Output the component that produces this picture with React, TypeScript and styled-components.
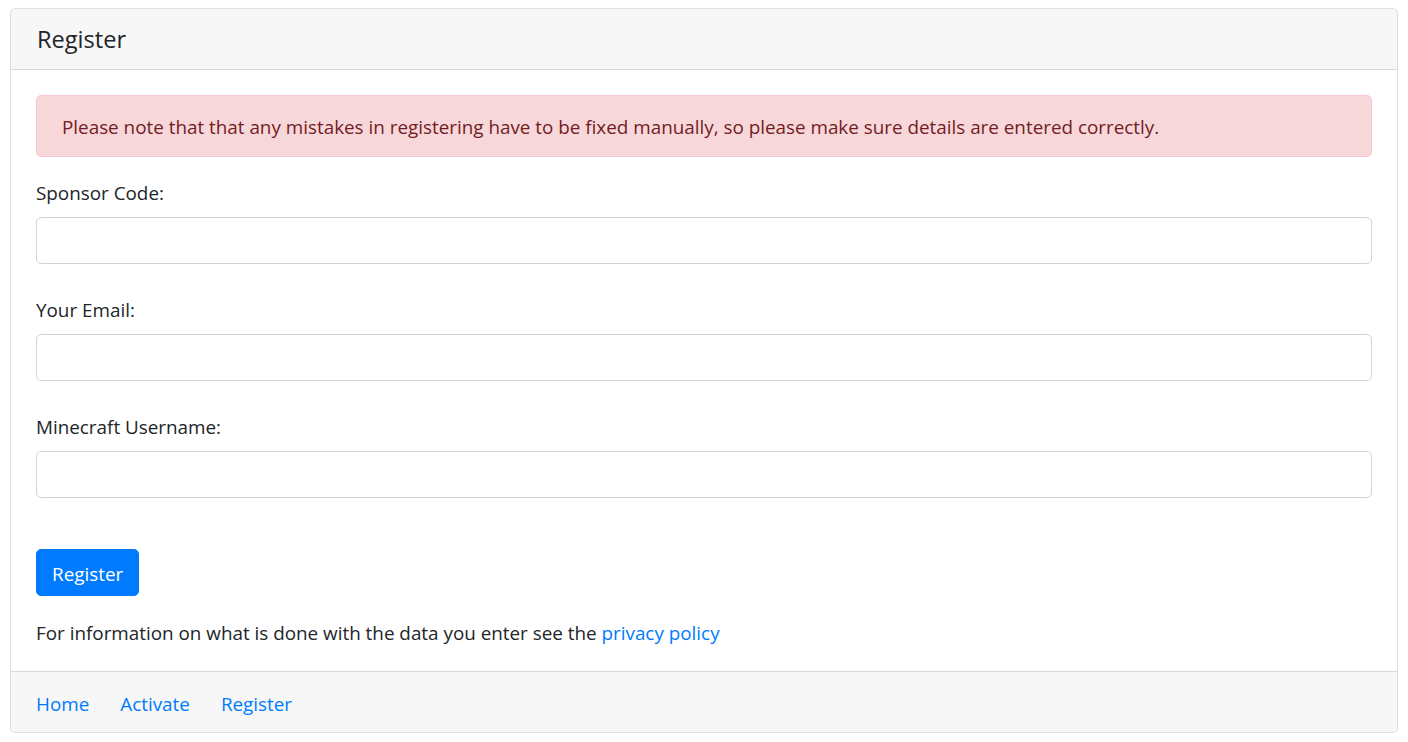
import React from "react";
import styled, { createGlobalStyle } from "styled-components";

const Global = createGlobalStyle`
  html, body { margin: 0; padding: 0; background: #fff; }
  body {
    font-family: "Open Sans", "Noto Sans", sans-serif;
    font-size: 18.85px;
    line-height: 30px;
    color: #212529;
  }
  * { box-sizing: border-box; }
`;

const Page = styled.div`
  padding: 8px 10px 9px 10px;
`;

const Card = styled.div`
  display: flex;
  flex-direction: column;
  border: 1px solid rgba(0, 0, 0, 0.125);
  border-radius: 5px;
  background: #fff;
  overflow: hidden;
`;

const CardHeader = styled.div`
  background: rgba(0, 0, 0, 0.03);
  border-bottom: 1px solid rgba(0, 0, 0, 0.125);
  padding: 15px 25px;
`;

const Title = styled.h5`
  margin: 0;
  font-size: 23.6px;
  font-weight: 400;
  line-height: 30px;
  padding-left: 1px;
`;

const CardBody = styled.div`
  padding: 25px 25px 23px;
  display: flex;
  flex-direction: column;
`;

const Alert = styled.div`
  background: #f8d7da;
  border: 1px solid #f5c6cb;
  color: #721c24;
  border-radius: 5px;
  padding: 16px 25px 14px;
  margin-bottom: 20px;
`;

const Field = styled.div`
  display: flex;
  flex-direction: column;
  margin-bottom: 30px;
`;

const Label = styled.label`
  padding-top: 1px;
  margin-bottom: 9px;
`;

const Input = styled.input`
  height: 47px;
  border: 1px solid #ced4da;
  border-radius: 5px;
  padding: 7px 15px;
  font: inherit;
  color: #495057;
  background: #fff;
  outline: none;
`;

const Button = styled.button`
  align-self: flex-start;
  margin-top: 21px;
  background: #007bff;
  border: 1px solid #007bff;
  color: #fff;
  border-radius: 5px;
  padding: 8.5px 15px 6.5px;
  font: inherit;
  line-height: 30px;
  cursor: pointer;
`;

const Note = styled.p`
  margin: 22px 0 0;
`;

const Link = styled.a`
  color: #007bff;
  text-decoration: none;
`;

const CardFooter = styled.div`
  background: rgba(0, 0, 0, 0.03);
  border-top: 1px solid rgba(0, 0, 0, 0.125);
  padding: 17px 25px 13px 25px;
  display: flex;
  gap: 31px;
`;

export default function App() {
  return (
    <>
      <Global />
      <Page>
        <Card>
          <CardHeader>
            <Title>Register</Title>
          </CardHeader>
          <CardBody>
            <Alert>
              Please note that that any mistakes in registering have to be fixed manually, so please make sure details are entered correctly.
            </Alert>
            <Field>
              <Label>Sponsor Code:</Label>
              <Input type="text" />
            </Field>
            <Field>
              <Label>Your Email:</Label>
              <Input type="email" />
            </Field>
            <Field>
              <Label>Minecraft Username:</Label>
              <Input type="text" />
            </Field>
            <Button>Register</Button>
            <Note>
              For information on what is done with the data you enter see the <Link href="#">privacy policy</Link>
            </Note>
          </CardBody>
          <CardFooter>
            <Link href="#">Home</Link>
            <Link href="#">Activate</Link>
            <Link href="#">Register</Link>
          </CardFooter>
        </Card>
      </Page>
    </>
  );
}
